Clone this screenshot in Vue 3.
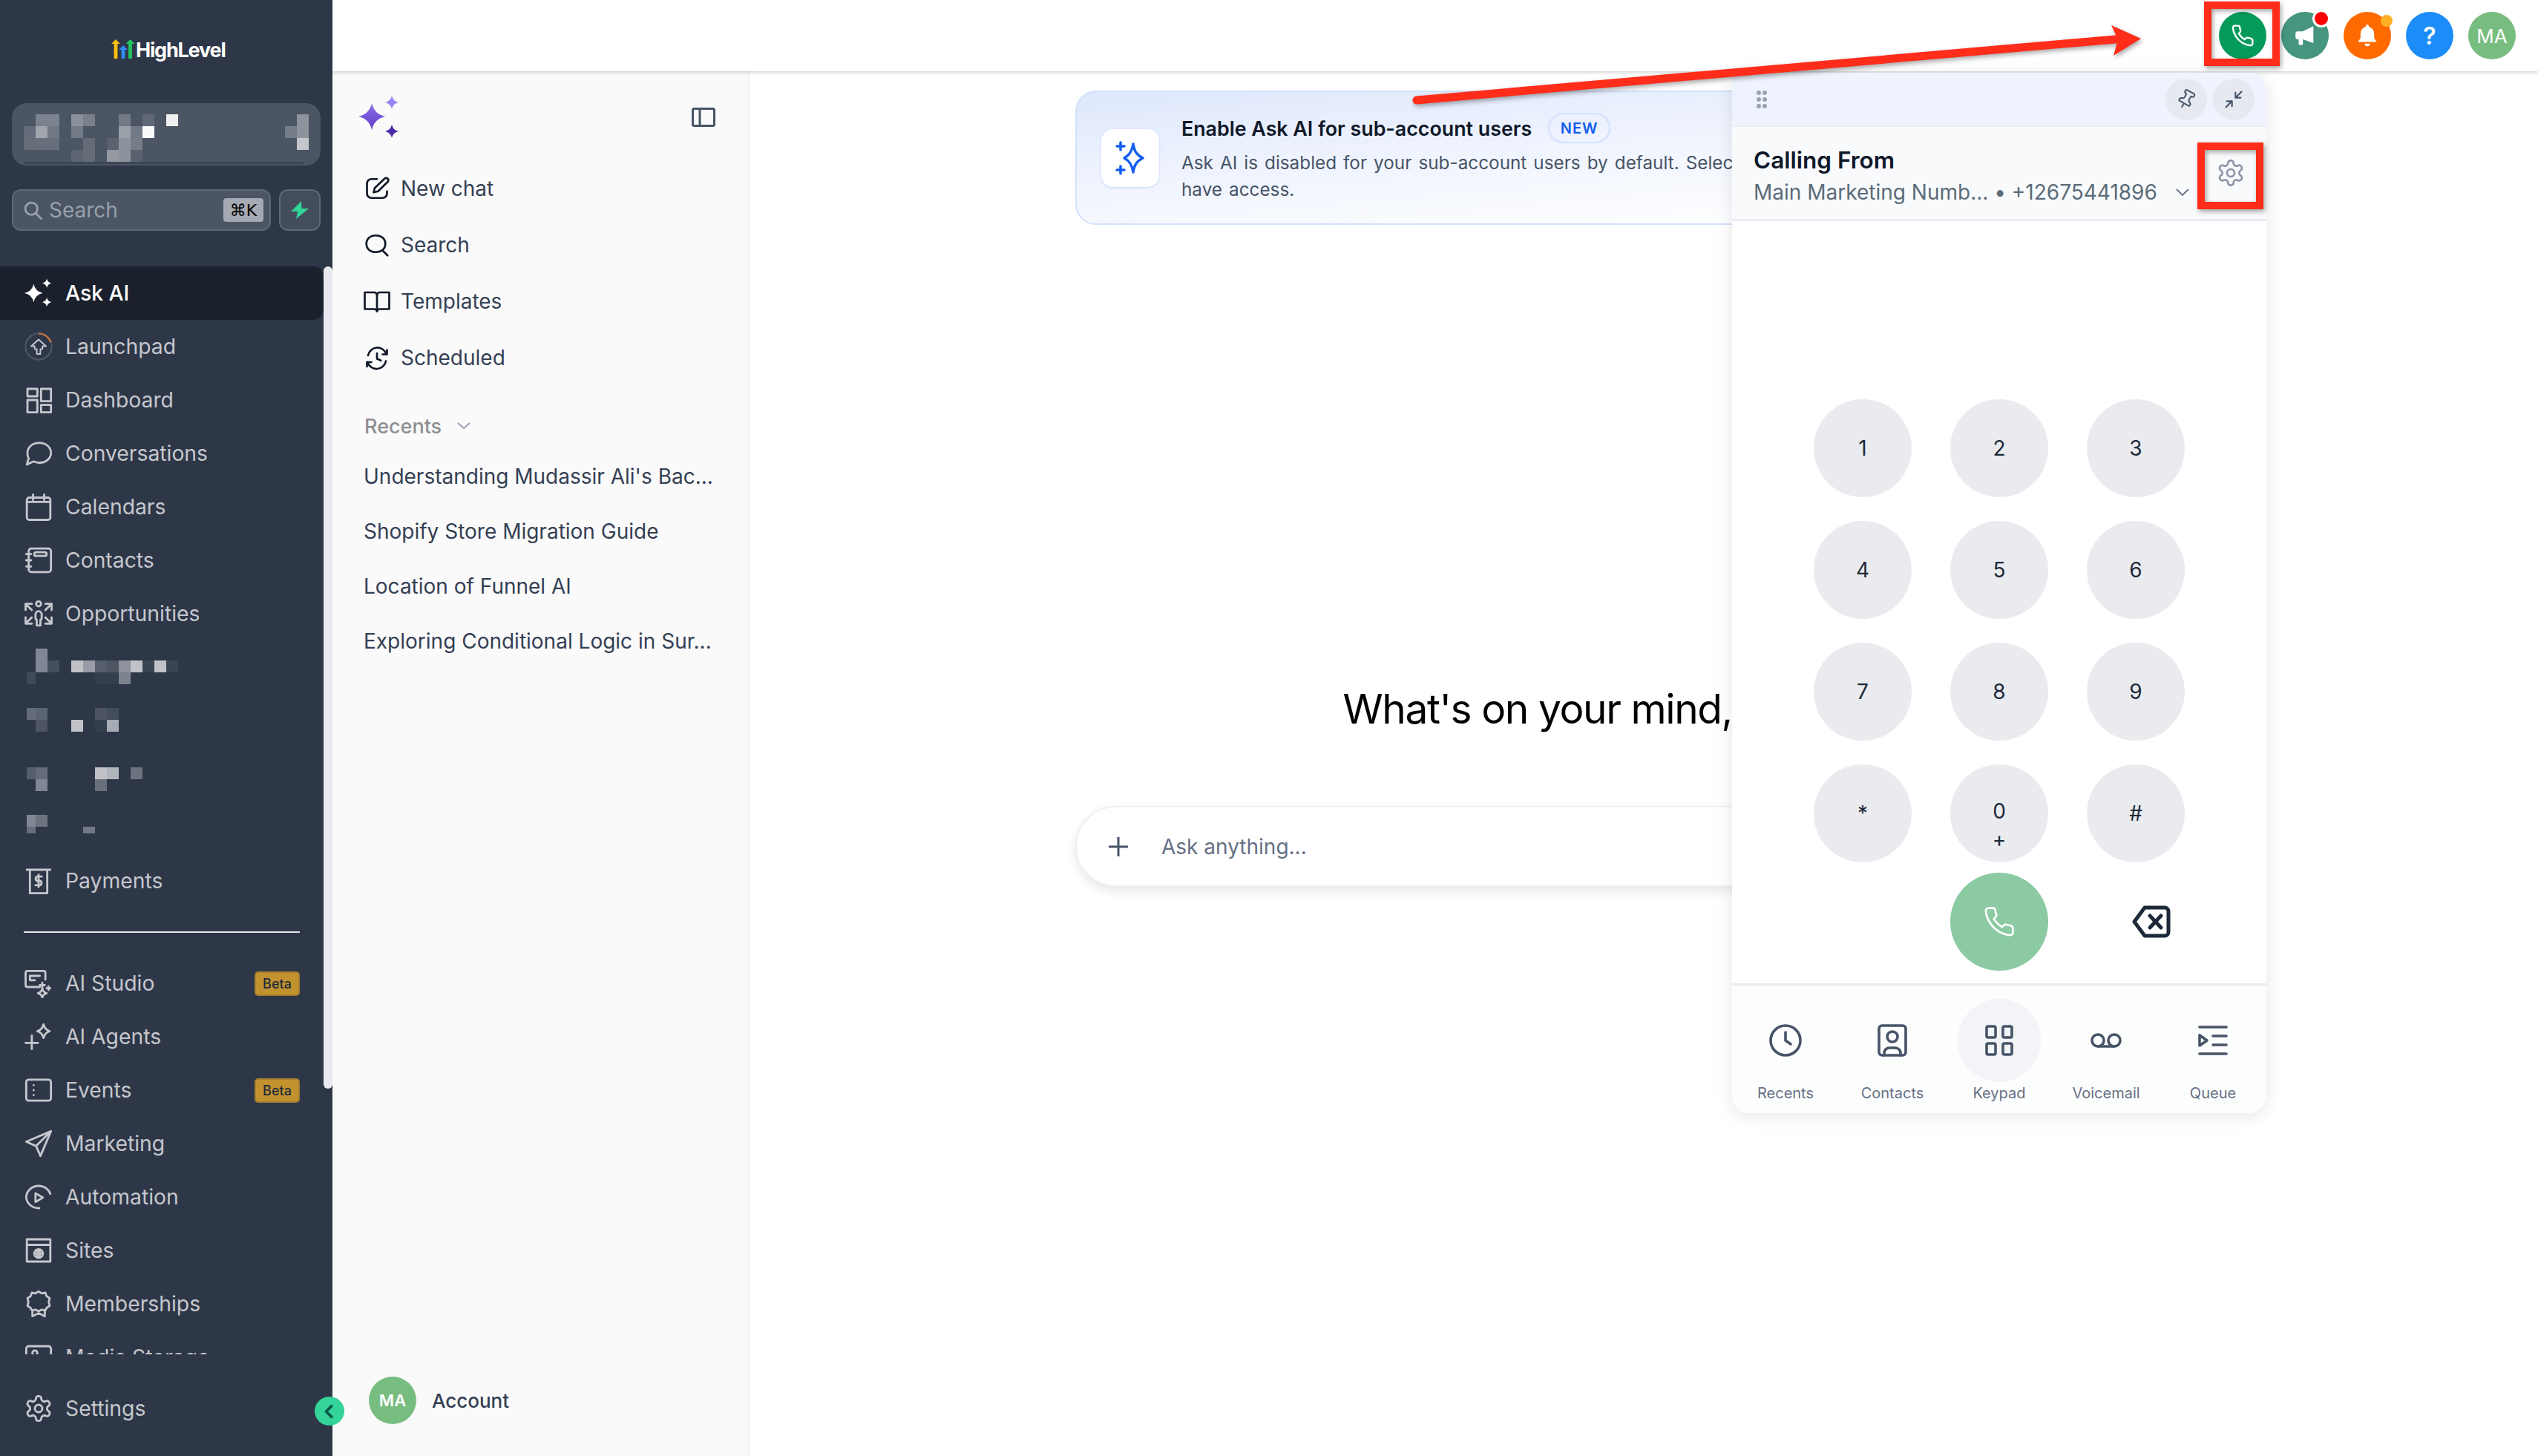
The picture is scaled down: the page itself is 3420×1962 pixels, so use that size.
<template>
  <div class="app">
    <aside class="sidebar">
      <div class="logo">
        <svg class="logo-mark" width="32" height="26" viewBox="0 0 32 26">
          <path fill="#fbbf0e" d="M0 6 6 0l6 6H8.400v20H3.600V6z" />
          <path fill="#2f8bf5" d="M10 14l6-6 6 6h-3.600v12h-4.800V14z" />
          <path fill="#22c55e" d="M19.500 6l6-6 6 6h-3.600v20h-4.800V6z" />
        </svg>
        <span class="logo-text">HighLevel</span>
      </div>

      <div class="switcher">
        <svg width="416" height="84" viewBox="16 0 416 84">
          <rect v-for="(b, i) in switcherBlocks" :key="i" :x="b[0]" :y="b[1]" width="16" height="16" :fill="b[2]" />
          <rect x="32" y="79" width="377" height="3" fill="#3d4655" />
        </svg>
      </div>

      <div class="search-row">
        <div class="side-search">
          <svg class="side-search-icon" width="28" height="28" viewBox="0 0 24 24" fill="none" stroke="#98a0ab" stroke-width="2.400" stroke-linecap="round">
            <circle cx="10.500" cy="10.500" r="7" /><path d="m16 16 6 6" />
          </svg>
          <span class="side-search-text">Search</span>
          <span class="kbd">⌘K</span>
        </div>
        <div class="bolt">
          <svg width="24" height="24" viewBox="0 0 24 24"><path fill="#34d399" d="M14 0 0 14h9l-2 10 17-14h-9.500z" /></svg>
        </div>
      </div>

      <nav class="nav">
        <template v-for="item in navItems" :key="item.key">
          <div v-if="item.blocks" class="nav-row redacted">
            <svg width="436" height="72">
              <rect v-for="(b, i) in item.blocks" :key="i" :x="b[0]" :y="b[1]" :width="b[2]" :height="b[3]" :fill="b[4]" />
            </svg>
          </div>
          <div v-else-if="item.divider" class="nav-divider"></div>
          <div v-else class="nav-row" :class="{ active: item.active }">
            <svg v-if="item.key === 'ask'" class="nav-icon" viewBox="0 0 36 36">
              <path fill="#fff" :d="askStars" />
            </svg>
            <svg v-else-if="item.key === 'launchpad'" class="nav-icon launch" viewBox="0 0 42 42" fill="none">
              <circle cx="21" cy="21" r="18.500" stroke="#4b5563" stroke-width="2.500" />
              <path d="M21 2.500A18.500 18.500 0 0 1 38.500 15" stroke="#b9733f" stroke-width="2.500" />
              <path d="M21 11 10.500 20.500h5v4h3v7h5v-7h3v-4h5z" stroke="#c5c7cd" stroke-width="2" stroke-linejoin="round" />
            </svg>
            <svg v-else class="nav-icon" viewBox="0 0 24 24" fill="none" stroke="currentColor" stroke-width="1.700" stroke-linecap="round" stroke-linejoin="round">
              <path v-for="(d, i) in item.paths" :key="i" :d="d" />
            </svg>
            <span class="nav-label">{{ item.label }}</span>
            <span v-if="item.beta" class="beta">Beta</span>
          </div>
        </template>
      </nav>

      <div class="nav-row settings">
        <svg class="nav-icon" viewBox="0 0 24 24" fill="none" stroke="currentColor" stroke-width="1.700" stroke-linecap="round" stroke-linejoin="round">
          <path :d="gear" /><circle cx="12" cy="12" r="3" />
        </svg>
        <span class="nav-label">Settings</span>
      </div>

      <div class="scroll-thumb"></div>
      <div class="collapse">
        <svg width="22" height="22" viewBox="0 0 24 24" fill="none" stroke="#0c5a48" stroke-width="4" stroke-linecap="round" stroke-linejoin="round"><path d="M15 4l-8 8 8 8" /></svg>
      </div>
    </aside>

    <div class="content">
      <header class="topbar">
        <div class="top-btn phone-btn">
          <svg width="32" height="32" viewBox="0 0 24 24" fill="none" stroke="#fff" stroke-width="1.800" stroke-linejoin="round"><path :d="phone" /></svg>
        </div>
        <div class="top-btn news-btn">
          <svg width="34" height="34" viewBox="0 0 24 24" fill="#fff"><path d="M20 3v16L10 15.500V20a1 1 0 0 1-1 1H7a1 1 0 0 1-1-1v-4.500H5a2 2 0 0 1-2-2v-3.500a2 2 0 0 1 2-2h5z" /></svg>
          <span class="dot red"></span>
        </div>
        <div class="top-btn bell-btn">
          <svg width="34" height="34" viewBox="0 0 24 24" fill="#fff"><path d="M12 1.500a1.500 1.500 0 0 1 1.500 1.500v.6A6.500 6.500 0 0 1 18.500 10v4.500L21 18H3l2.500-3.500V10a6.500 6.500 0 0 1 5-6.400V3A1.500 1.500 0 0 1 12 1.500zM9.500 19.500h5a2.500 2.500 0 0 1-5 0z" /></svg>
          <span class="dot yellow"></span>
        </div>
        <div class="top-btn help">?</div>
        <div class="top-btn avatar-text">MA</div>
      </header>

      <div class="body">
        <section class="chats">
          <div class="chats-head">
            <svg width="54" height="58" viewBox="0 0 54 58">
              <defs>
                <linearGradient id="sparkA" x1="0" y1="0" x2="0" y2="1"><stop offset="0" stop-color="#8b6ee8" /><stop offset="1" stop-color="#5f3dc4" /></linearGradient>
              </defs>
              <path fill="url(#sparkA)" :d="logoBig" />
              <path fill="#9b82f5" :d="logoTop" />
              <path fill="#4c2ba8" :d="logoBottom" />
            </svg>
            <svg width="32" height="26" viewBox="0 0 32 26" fill="none" stroke="#475467" stroke-width="3"><rect x="1.500" y="1.500" width="29" height="23" rx="2" /><path d="M11 1.500v23" /></svg>
          </div>

          <div v-for="a in chatActions" :key="a.label" class="chat-action">
            <svg width="36" height="36" viewBox="0 0 24 24" fill="none" stroke="#101828" stroke-width="1.800" stroke-linecap="round" stroke-linejoin="round">
              <path v-for="(d, i) in a.paths" :key="i" :d="d" />
            </svg>
            <span>{{ a.label }}</span>
          </div>

          <div class="recents-title">
            <span>Recents</span>
            <svg width="20" height="12" viewBox="0 0 20 12" fill="none" stroke="#98a2b3" stroke-width="2"><path d="M2 2l8 7 8-7" /></svg>
          </div>
          <div v-for="r in recents" :key="r" class="recent">{{ r }}</div>

          <div class="account">
            <div class="account-avatar">MA</div>
            <span>Account</span>
          </div>
        </section>

        <main class="main">
          <div class="banner">
            <div class="banner-icon">
              <svg width="40" height="46" viewBox="0 0 40 46" fill="none" stroke="#155eef" stroke-width="3.500" stroke-linecap="round" stroke-linejoin="round">
                <path d="M24 4c1.500 10 5 15 13 19-8 4-11.500 9-13 19-1.500-10-5-15-12-19 7-4 10.500-9 12-19z" />
                <path d="M7 2v10M2 7h10M7 34v10M2 39h10" />
              </svg>
            </div>
            <div class="banner-text">
              <div class="banner-title">
                <span>Enable Ask AI for sub-account users</span>
                <span class="new-pill">NEW</span>
              </div>
              <p>Ask AI is disabled for your sub-account users by default. Select which users should<br />have access.</p>
            </div>
          </div>

          <h1 class="greeting">What's on your mind, Mudassir?</h1>

          <div class="ask-box">
            <svg width="30" height="30" viewBox="0 0 30 30" fill="none" stroke="#475467" stroke-width="3"><path d="M15 2v26M2 15h26" /></svg>
            <span>Ask anything...</span>
          </div>
        </main>
      </div>
    </div>

    <!-- floating dialer -->
    <div class="dialer">
      <div class="dialer-head">
        <svg class="drag" width="16" height="24" viewBox="0 0 16 24" fill="#98a2b3">
          <circle v-for="(p, i) in dragDots" :key="i" :cx="p[0]" :cy="p[1]" r="3" />
        </svg>
        <div class="head-btn">
          <svg width="28" height="28" viewBox="0 0 24 24" fill="none" stroke="#475467" stroke-width="1.700" stroke-linejoin="round" stroke-linecap="round"><path d="M12 17v5M9 10.800a2 2 0 0 1-1.100 1.800l-1.800.9A2 2 0 0 0 5 15.200V16a1 1 0 0 0 1 1h12a1 1 0 0 0 1-1v-.8a2 2 0 0 0-1.100-1.800l-1.800-.9a2 2 0 0 1-1.100-1.800V7a1 1 0 0 1 1-1 2 2 0 0 0 0-4H8a2 2 0 0 0 0 4 1 1 0 0 1 1 1z" transform="rotate(30 12 12)" /></svg>
        </div>
        <div class="head-btn">
          <svg width="28" height="28" viewBox="0 0 24 24" fill="none" stroke="#475467" stroke-width="1.800" stroke-linecap="round" stroke-linejoin="round"><path d="M21 3l-7 7M14 4v6h6M3 21l7-7M4 14h6v6" /></svg>
        </div>
      </div>

      <div class="calling">
        <div class="calling-text">
          <div class="calling-title">Calling From</div>
          <div class="calling-line">
            <span>Main Marketing Numb... • +12675441896</span>
            <svg width="20" height="12" viewBox="0 0 20 12" fill="none" stroke="#667085" stroke-width="1.800"><path d="M2 2l8 8 8-8" /></svg>
          </div>
        </div>
        <svg class="calling-gear" width="40" height="40" viewBox="0 0 24 24" fill="none" stroke="#8d96a8" stroke-width="1.600" stroke-linejoin="round">
          <path :d="gear" /><circle cx="12" cy="12" r="3" />
        </svg>
      </div>

      <div class="keypad">
        <div v-for="k in keys" :key="k.digit" class="key" :class="{ plus: k.sub }">
          <span>{{ k.digit }}</span>
          <span v-if="k.sub" class="key-sub">{{ k.sub }}</span>
        </div>
        <div class="key-spacer"></div>
        <div class="call-btn">
          <svg width="44" height="44" viewBox="0 0 24 24" fill="none" stroke="#fff" stroke-width="1.500" stroke-linejoin="round"><path :d="phone" /></svg>
        </div>
        <div class="backspace">
          <svg width="52" height="44" viewBox="0 0 52 44" fill="none" stroke="#1d2939" stroke-width="5" stroke-linecap="round" stroke-linejoin="round">
            <path d="M17 3h27a5 5 0 0 1 5 5v28a5 5 0 0 1-5 5H17L3 22z" /><path d="M24 14l15 16M39 14 24 30" />
          </svg>
        </div>
      </div>

      <div class="tabs">
        <div v-for="t in tabs" :key="t.label" class="tab" :class="{ current: t.current }">
          <div class="tab-circle">
            <svg width="48" height="48" viewBox="0 0 24 24" fill="none" stroke="#475467" stroke-width="1.800" stroke-linecap="round" stroke-linejoin="round">
              <path v-for="(d, i) in t.paths" :key="i" :d="d" />
            </svg>
          </div>
          <span>{{ t.label }}</span>
        </div>
      </div>
    </div>

    <!-- red annotations from the screenshot -->
    <svg class="marks" width="3420" height="1962">
      <path d="M1909 135 2862 52" stroke="#ff2d1a" stroke-width="11" stroke-linecap="round" />
      <path d="M2845 34 2885 52 2848 75 2854 53z" fill="#ff2d1a" />
      <rect x="2975" y="7" width="92" height="77" fill="none" stroke="#ff2d1a" stroke-width="10" />
      <rect x="2966" y="197" width="79" height="80" fill="none" stroke="#ff2d1a" stroke-width="10" />
    </svg>
  </div>
</template>

<script setup>
function star(cx, cy, r) {
  const k = r * 0.18;
  return `M${cx} ${cy - r}Q${cx + k} ${cy - k} ${cx + r} ${cy}Q${cx + k} ${cy + k} ${cx} ${cy + r}Q${cx - k} ${cy + k} ${cx - r} ${cy}Q${cx - k} ${cy - k} ${cx} ${cy - r}Z`;
}

const askStars = star(12, 18, 11) + star(28, 6, 5.5) + star(28, 29, 5.5);
const logoBig = star(18, 28, 18);
const logoTop = star(45, 9, 9);
const logoBottom = star(45, 48, 9);

const gear =
  'M12.220 2h-.44a2 2 0 0 0-2 2v.18a2 2 0 0 1-1 1.730l-.43.25a2 2 0 0 1-2 0l-.15-.08a2 2 0 0 0-2.730.73l-.22.38a2 2 0 0 0 .73 2.730l.15.1a2 2 0 0 1 1 1.720v.51a2 2 0 0 1-1 1.740l-.15.09a2 2 0 0 0-.73 2.730l.22.38a2 2 0 0 0 2.730.73l.15-.08a2 2 0 0 1 2 0l.43.25a2 2 0 0 1 1 1.730V20a2 2 0 0 0 2 2h.44a2 2 0 0 0 2-2v-.18a2 2 0 0 1 1-1.730l.43-.25a2 2 0 0 1 2 0l.15.08a2 2 0 0 0 2.730-.73l.22-.39a2 2 0 0 0-.73-2.730l-.15-.08a2 2 0 0 1-1-1.740v-.5a2 2 0 0 1 1-1.740l.15-.09a2 2 0 0 0 .73-2.730l-.22-.38a2 2 0 0 0-2.730-.73l-.15.08a2 2 0 0 1-2 0l-.43-.25a2 2 0 0 1-1-1.730V4a2 2 0 0 0-2-2z';
const phone =
  'M22 16.920v3a2 2 0 0 1-2.180 2 19.790 19.790 0 0 1-8.630-3.070 19.500 19.500 0 0 1-6-6 19.790 19.790 0 0 1-3.070-8.670A2 2 0 0 1 4.110 2h3a2 2 0 0 1 2 1.720 12.840 12.840 0 0 0 .7 2.810 2 2 0 0 1-.45 2.110L8.090 9.910a16 16 0 0 0 6 6l1.270-1.270a2 2 0 0 1 2.110-.45 12.840 12.840 0 0 0 2.810.7A2 2 0 0 1 22 16.920z';

// mosaic redaction blocks: x, y, colour
const switcherBlocks = [
  [48, 15, '#7a838f'], [64, 15, '#7a838f'], [96, 15, '#8a919b'], [112, 15, '#78808c'], [160, 15, '#727a86'], [192, 15, '#5f6874'], [224, 15, '#f0f0f0'],
  [32, 31, '#636c78'], [48, 31, '#a0a5ad'], [64, 31, '#6f7883'], [96, 31, '#727a86'], [160, 31, '#9aa0a8'], [176, 31, '#727a86'], [192, 31, '#fafafa'],
  [32, 47, '#646d78'], [48, 47, '#666f7b'], [64, 47, '#666f7b'], [112, 47, '#646c78'], [144, 47, '#59626e'], [160, 47, '#8d939c'], [176, 47, '#757d88'],
  [96, 63, '#5c6571'], [112, 63, '#656d79'], [144, 63, '#9398a1'], [160, 63, '#8d939c'], [176, 63, '#59626e'],
  [400, 15, '#8d939c'], [384, 31, '#757d88'], [400, 31, '#8d939c'], [400, 47, '#c4c6ca'],
];

const navItems = [
  { key: 'ask', label: 'Ask AI', active: true },
  { key: 'launchpad', label: 'Launchpad' },
  { key: 'dashboard', label: 'Dashboard', paths: ['M3 3h8v6H3zM14 3h8v10h-8zM3 12h8v10H3zM14 16h8v6h-8z'] },
  { key: 'conversations', label: 'Conversations', paths: ['M22 11.500a9 8 0 0 1-9.500 8 10 10 0 0 1-4.500-1L2.500 21l1.500-5A8 8 0 0 1 3 11.500a9 8 0 0 1 9.500-8 9 8 0 0 1 9.500 8z'] },
  { key: 'calendars', label: 'Calendars', paths: ['M4.500 4.500h15a2 2 0 0 1 2 2v14a2 2 0 0 1-2 2h-15a2 2 0 0 1-2-2v-14a2 2 0 0 1 2-2zM7.500 2v4.500M16.500 2v4.500M2.500 8h19'] },
  { key: 'contacts', label: 'Contacts', paths: ['M6 2.500h14a2 2 0 0 1 2 2v15a2 2 0 0 1-2 2H6a2 2 0 0 1-2-2v-15a2 2 0 0 1 2-2zM10 5.500h7a1.500 1.500 0 0 1 0 3h-7a1.500 1.500 0 0 1 0-3zM2 7h4M2 12h4M2 17h4'] },
  { key: 'opportunities', label: 'Opportunities', paths: ['M14 4a2 2 0 1 1-4 0 2 2 0 0 1 4 0zM9.500 12.500a2.500 2.500 0 0 1 5 0V16l-1 1v4.500h-3V17l-1-1zM1.500 9V4h5M1.500 4l5 5M22.500 9V4h-5M22.500 4l-5 5M1.500 15v5h5M1.500 20l5-5M22.500 15v5h-5M22.500 20l-5-5'] },
  { key: 'r1', blocks: [[48, 11, 16, 32, '#7f8794'], [64, 27, 16, 16, '#454e5b'], [36, 43, 12, 16, '#414a58'], [96, 27, 16, 16, '#c0c2c8'], [112, 27, 16, 16, '#979ca6'], [128, 27, 16, 16, '#565e6b'], [144, 27, 16, 16, '#4d5562'], [160, 27, 16, 16, '#8d929c'], [176, 27, 16, 16, '#c0c2c8'], [192, 27, 16, 16, '#3b4452'], [208, 27, 16, 16, '#c0c2c8'], [224, 27, 16, 16, '#3b4452'], [128, 43, 32, 16, '#353e4c'], [160, 43, 16, 16, '#7d838e']] },
  { key: 'r2', blocks: [[36, 19, 12, 16, '#646c79'], [48, 19, 16, 16, '#5a6370'], [48, 35, 16, 16, '#4d5562'], [96, 35, 16, 16, '#c0c2c8'], [128, 19, 16, 16, '#4d5562'], [144, 19, 16, 16, '#434c5a'], [128, 35, 16, 16, '#353e4c'], [144, 35, 16, 16, '#a7abb3']] },
  { key: 'r3', blocks: [[36, 27, 12, 16, '#555e6b'], [48, 27, 16, 16, '#646c79'], [48, 43, 16, 16, '#7f8794'], [128, 27, 16, 16, '#c0c2c8'], [144, 27, 16, 16, '#b0b4bb'], [176, 27, 16, 16, '#6d7480'], [128, 43, 16, 16, '#69707c']] },
  { key: 'r4', blocks: [[36, 19, 12, 16, '#7f8794'], [48, 19, 16, 16, '#6d7480'], [36, 35, 12, 9, '#666e7a'], [112, 35, 16, 9, '#737a85']] },
  { key: 'payments', label: 'Payments', paths: ['M2.500 3h19M5 3v19h14V3M14.500 8.500h-3.500a1.800 1.800 0 0 0 0 3.500h2a1.800 1.800 0 0 1 0 3.500H9.500M12 7v10'] },
  { key: 'div', divider: true },
  { key: 'studio', label: 'AI Studio', beta: true, paths: ['M13 15H3a1.500 1.500 0 0 1-1.500-1.500v-10A1.500 1.500 0 0 1 3 2h13a1.500 1.500 0 0 1 1.500 1.500V9M5 6h8M5 6v3.500h4M15 11.500v4M13 13.500h4M20 14.500v3M18.500 16h3M15 16c.5 2.500 1.500 3.500 3.500 4-2 .5-3 1.500-3.500 3.500-.5-2-1.500-3-3.500-3.500 2-.5 3-1.500 3.500-4z'] },
  { key: 'agents', label: 'AI Agents', paths: ['M16 2c.7 3 2 4.500 5 5.500-3 1-4.300 2.500-5 5.500-.7-3-2-4.500-5-5.500 3-1 4.300-2.500 5-5.500zM6.500 11v11M1.500 17h10'] },
  { key: 'events', label: 'Events', beta: true, paths: ['M4 3.500h16a2 2 0 0 1 2 2v13a2 2 0 0 1-2 2H4a2 2 0 0 1-2-2v-13a2 2 0 0 1 2-2zM8 8v.01M8 12v.01M8 16v.01'] },
  { key: 'marketing', label: 'Marketing', paths: ['M22 2 2 10.500l8 3.500 3.500 8zM22 2 10 14'] },
  { key: 'automation', label: 'Automation', paths: ['M21.500 9.500A10 9.500 0 0 0 12.500 3 10 9.500 0 0 0 2 12.500 10 9.500 0 0 0 12.500 21M9.500 9v7l6-3.500z'] },
  { key: 'sites', label: 'Sites', paths: ['M2.500 3h19v18h-19zM2.500 7.500h19M12 11a3.500 3.500 0 1 1 0 7 3.500 3.500 0 0 1 0-7zM8.500 14.500h7M12 11c-1.500 2-1.500 5 0 7M12 11c1.500 2 1.500 5 0 7'] },
  { key: 'memberships', label: 'Memberships', paths: ['M12 2l2.500 1.500 3-.5 1 2.800 2.500 1.700-.8 3 .8 3-2.500 1.700-1 2-3-.5L12 18l-2.500-1.300-3 .5-1-2-2.500-1.700.8-3-.8-3 2.500-1.700 1-2.800 3 .5zM7 17v5l5-2.500 5 2.500v-5'] },
  { key: 'media', label: 'Media Storage', paths: ['M4 3h16a2 2 0 0 1 2 2v14a2 2 0 0 1-2 2H4a2 2 0 0 1-2-2V5a2 2 0 0 1 2-2zM9 6.500a2 2 0 1 1 0 4 2 2 0 0 1 0-4z'] },
];

const chatActions = [
  { label: 'New chat', paths: ['M12 3.500H7a4 4 0 0 0-4 4v9a4 4 0 0 0 4 4h10a4 4 0 0 0 4-4v-2', 'M19 3a2 2 0 0 1 2.800 2.800L13 14.500l-4 1 1-4z'] },
  { label: 'Search', paths: ['M11 3.500c5 0 8.500 3 8.500 7.500s-3.500 7.500-8.500 7.500S2.500 15.500 2.500 11 6 3.500 11 3.500z', 'M17 17l4.500 4.500'] },
  { label: 'Templates', paths: ['M12 6.500a2.500 2.500 0 0 0-2.500-2.500H1v15h8.500a2.500 2.500 0 0 1 2.500 2 2.500 2.500 0 0 1 2.500-2H23V4h-8.500A2.500 2.500 0 0 0 12 6.500z', 'M12 6.500v14.500'] },
  { label: 'Scheduled', paths: ['M4 10a8.500 8.500 0 0 1 16.500-1', 'M20 15a8.500 8.500 0 0 1-16.500 1', 'M21 5v4h-4', 'M3 20v-4h4', 'M12 8v5l3.500 1.500'] },
];

const recents = ["Understanding Mudassir Ali's Bac...", 'Shopify Store Migration Guide', 'Location of Funnel AI', 'Exploring Conditional Logic in Sur...'];

const dragDots = [[4, 3], [12, 3], [4, 12], [12, 12], [4, 21], [12, 21]];

const keys = [
  { digit: '1' }, { digit: '2' }, { digit: '3' },
  { digit: '4' }, { digit: '5' }, { digit: '6' },
  { digit: '7' }, { digit: '8' }, { digit: '9' },
  { digit: '*' }, { digit: '0', sub: '+' }, { digit: '#' },
];

const tabs = [
  { label: 'Recents', paths: ['M12 2a10 10 0 1 1 0 20 10 10 0 0 1 0-20z', 'M12 6.500V12l3.500 2.500'] },
  { label: 'Contacts', paths: ['M5 2h14a2 2 0 0 1 2 2v16a2 2 0 0 1-2 2H5a2 2 0 0 1-2-2V4a2 2 0 0 1 2-2z', 'M12 6a3.500 3.500 0 1 1 0 7 3.500 3.500 0 0 1 0-7z', 'M6.500 22v-1.500a3.500 3.500 0 0 1 3.500-3.500h4a3.500 3.500 0 0 1 3.500 3.500V22'] },
  { label: 'Keypad', current: true, paths: ['M4.500 2.500h4a1 1 0 0 1 1 1v5.500a1 1 0 0 1-1 1h-4a1 1 0 0 1-1-1V3.500a1 1 0 0 1 1-1z', 'M15.500 2.500h4a1 1 0 0 1 1 1v5.500a1 1 0 0 1-1 1h-4a1 1 0 0 1-1-1V3.500a1 1 0 0 1 1-1z', 'M4.500 14h4a1 1 0 0 1 1 1v5.500a1 1 0 0 1-1 1h-4a1 1 0 0 1-1-1V15a1 1 0 0 1 1-1z', 'M15.500 14h4a1 1 0 0 1 1 1v5.500a1 1 0 0 1-1 1h-4a1 1 0 0 1-1-1V15a1 1 0 0 1 1-1z'] },
  { label: 'Voicemail', paths: ['M6.500 8a4 4 0 1 1 0 8 4 4 0 0 1 0-8z', 'M17.500 8a4 4 0 1 1 0 8 4 4 0 0 1 0-8z', 'M6.500 16h11'] },
  { label: 'Queue', paths: ['M3 3h18', 'M3 21h18', 'M3 8.500v7l5-3.500z', 'M12 9h9', 'M12 15h9'] },
];
</script>

<style>
html,
body {
  margin: 0;
  background: #fff;
}
</style>

<style scoped>
* {
  box-sizing: border-box;
}
.app {
  position: relative;
  display: flex;
  width: 3420px;
  height: 1962px;
  overflow: hidden;
  font-family: Inter, "Noto Sans", sans-serif;
  color: #101828;
}

/* sidebar */
.sidebar {
  position: relative;
  z-index: 3;
  flex: 0 0 448px;
  display: flex;
  flex-direction: column;
  background: #2e3748;
}
.logo {
  height: 139px;
  padding: 53px 0 0 150px;
  display: flex;
  align-items: flex-start;
  gap: 1px;
}
.logo-text {
  color: #fff;
  font-size: 27px;
  font-weight: 700;
  letter-spacing: -1.200px;
  line-height: 30px;
}
.switcher {
  height: 84px;
  margin: 0 16px;
  background: #4b5563;
  border-radius: 20px;
  overflow: hidden;
}
.switcher svg {
  display: block;
}
.search-row {
  display: flex;
  gap: 11px;
  margin: 32px 16px 0;
  height: 56px;
}
.side-search {
  flex: 1;
  display: flex;
  align-items: center;
  padding: 0 8px 0 12px;
  background: #4b5563;
  border: 2px solid #5f6874;
  border-radius: 12px;
}
.side-search-icon {
  margin-right: 8px;
}
.side-search-text {
  flex: 1;
  color: #98a0ab;
  font-size: 28px;
}
.kbd {
  width: 54px;
  height: 32px;
  display: flex;
  align-items: center;
  justify-content: center;
  background: #a4a9b3;
  border-radius: 4px;
  color: #000;
  font-size: 22px;
  font-family: "DejaVu Sans", sans-serif;
}
.bolt {
  flex: 0 0 56px;
  display: flex;
  align-items: center;
  justify-content: center;
  background: #434d5c;
  border: 2px solid #5f6874;
  border-radius: 12px;
}
.nav {
  height: 1466px;
  margin-top: 48px;
  overflow: hidden;
  flex-shrink: 0;
}
.nav-row {
  width: 436px;
  height: 72px;
  display: flex;
  align-items: center;
  padding-left: 32px;
  color: #c5c7cd;
  font-size: 28.300px;
  border-radius: 0 14px 14px 0;
}
.nav-row.redacted {
  padding-left: 0;
}
.nav-row.active {
  background: #1a202c;
  color: #fff;
  font-weight: 500;
}
.nav-icon {
  flex: 0 0 40px;
  width: 40px;
  height: 40px;
  margin-right: 16px;
}
.launch {
  color: #c5c7cd;
}
.nav-label {
  flex: 1;
}
.beta {
  width: 61px;
  height: 33px;
  margin-right: 32px;
  display: flex;
  align-items: center;
  justify-content: center;
  background: #c1922e;
  border: 2px solid #a67f2d;
  border-radius: 5px;
  color: #1f2a3c;
  font-size: 18px;
  font-weight: 500;
}
.nav-divider {
  height: 2px;
  margin: 32px 44px 32px 32px;
  background: #e4e6ea;
}
.settings {
  margin-top: 37px;
}
.scroll-thumb {
  position: absolute;
  left: 436px;
  top: 359px;
  width: 12px;
  height: 1108px;
  background: #e9eaf0;
  border-radius: 6px;
}
.collapse {
  position: absolute;
  left: 424px;
  top: 1882px;
  width: 40px;
  height: 39px;
  display: flex;
  align-items: center;
  justify-content: center;
  background: #34d399;
  border-radius: 50%;
}

/* content */
.content {
  flex: 1;
  display: flex;
  flex-direction: column;
  min-width: 0;
}
.topbar {
  position: relative;
  z-index: 2;
  height: 96px;
  flex-shrink: 0;
  display: flex;
  justify-content: flex-end;
  align-items: center;
  gap: 20px;
  padding-right: 30px;
  background: #fff;
  box-shadow: 0 2px 4px rgba(16, 24, 40, 0.18);
}
.top-btn {
  position: relative;
  width: 64px;
  height: 64px;
  border-radius: 50%;
  display: flex;
  align-items: center;
  justify-content: center;
  color: #fff;
}
.phone-btn {
  background: #059a5a;
}
.news-btn {
  background: #46957f;
}
.bell-btn {
  background: #fe6a00;
}
.help {
  background: #1c8df8;
  font-size: 32px;
  font-weight: 600;
}
.avatar-text {
  background: #78bd80;
  font-size: 26px;
}
.dot {
  position: absolute;
  border-radius: 50%;
}
.dot.red {
  right: -2px;
  top: -3px;
  width: 24px;
  height: 24px;
  background: #ff0000;
  border: 3px solid #fff;
}
.dot.yellow {
  right: -2px;
  top: 4px;
  width: 16px;
  height: 16px;
  background: #fdb022;
}
.body {
  flex: 1;
  display: flex;
  min-height: 0;
}

/* chat list */
.chats {
  flex: 0 0 562px;
  display: flex;
  flex-direction: column;
  padding: 33px 0 43px;
  background: #fafafa;
  border-right: 2px solid #f0f0f2;
}
.chats-head {
  display: flex;
  align-items: center;
  justify-content: space-between;
  height: 58px;
  padding: 0 44px 0 35px;
  margin-bottom: 29px;
}
.chat-action {
  height: 76px;
  display: flex;
  align-items: center;
  gap: 14px;
  padding-left: 42px;
  font-size: 28px;
  color: #344054;
}
.recents-title {
  height: 40px;
  margin-top: 34px;
  padding-left: 43px;
  display: flex;
  align-items: center;
  gap: 20px;
  color: #8e8e93;
  font-size: 27px;
  font-weight: 500;
}
.recents-title + .recent {
  margin-top: 11px;
}
.recent {
  height: 74px;
  padding-left: 42px;
  display: flex;
  align-items: center;
  font-size: 28px;
  color: #344054;
  white-space: nowrap;
}
.account {
  margin-top: auto;
  padding-left: 49px;
  display: flex;
  align-items: center;
  gap: 21px;
  font-size: 26px;
  font-weight: 500;
  color: #344054;
}
.account-avatar {
  width: 64px;
  height: 64px;
  border-radius: 50%;
  display: flex;
  align-items: center;
  justify-content: center;
  background: #78bd80;
  color: #fff;
  font-size: 22px;
  font-weight: 600;
}

/* main */
.main {
  flex: 1;
  display: flex;
  flex-direction: column;
  align-items: center;
  padding-top: 26px;
  background: #fff;
}
.banner {
  width: 1532px;
  height: 181px;
  flex-shrink: 0;
  display: flex;
  align-items: center;
  gap: 30px;
  padding: 0 0 0 33px;
  background: linear-gradient(175deg, #dee8fc 0%, #edf2fd 35%, #fff 85%);
  border: 2px solid #d3e1fb;
  border-radius: 28px;
}
.banner-icon {
  width: 78px;
  height: 78px;
  display: flex;
  align-items: center;
  justify-content: center;
  background: #fff;
  border-radius: 16px;
  box-shadow: 0 1px 3px rgba(21, 94, 239, 0.2);
}
.banner-title {
  display: flex;
  align-items: center;
  gap: 22px;
  font-size: 26.800px;
  font-weight: 600;
  color: #101828;
}
.new-pill {
  width: 84px;
  height: 41px;
  display: flex;
  align-items: center;
  justify-content: center;
  border: 2px solid #d1e0ff;
  border-radius: 21px;
  color: #155eef;
  font-size: 20px;
  font-weight: 600;
  letter-spacing: 1px;
}
.banner-text p {
  margin: 8px 0 0;
  font-size: 24.300px;
  word-spacing: 2.200px;
  line-height: 36px;
  color: #475467;
  white-space: nowrap;
}
.greeting {
  margin: 619px 0 0;
  padding-right: 18px;
  font-size: 55px;
  font-weight: 400;
  letter-spacing: -1.400px;
  line-height: 66px;
  color: #000;
  white-space: nowrap;
}
.ask-box {
  width: 1532px;
  height: 109px;
  margin-top: 98px;
  flex-shrink: 0;
  display: flex;
  align-items: center;
  gap: 43px;
  padding-left: 41px;
  background: #fff;
  border: 2px solid #f0f0f2;
  border-radius: 55px;
  box-shadow: 0 6px 14px rgba(16, 24, 40, 0.1);
  color: #667085;
  font-size: 28px;
}

/* dialer */
.dialer {
  position: absolute;
  z-index: 4;
  left: 2334px;
  top: 98px;
  width: 720px;
  height: 1402px;
  display: flex;
  flex-direction: column;
  background: #fff;
  border-radius: 0 24px 24px 24px;
  box-shadow: 0 4px 24px rgba(16, 24, 40, 0.1);
  overflow: hidden;
}
.dialer-head {
  height: 73px;
  flex-shrink: 0;
  display: flex;
  align-items: center;
  gap: 8px;
  padding: 0 16px 0 32px;
  background: #eef3fd;
  border-bottom: 2px solid #ebecf1;
}
.drag {
  margin-right: auto;
}
.head-btn {
  width: 56px;
  height: 56px;
  display: flex;
  align-items: center;
  justify-content: center;
  border-radius: 50%;
  background: #e6e9f0;
}
.calling {
  height: 127px;
  flex-shrink: 0;
  display: flex;
  align-items: center;
  padding: 0 28px 0 29px;
  background: #f8fafc;
  border-bottom: 3px solid #ebecf1;
}
.calling-text {
  flex: 1;
  padding-top: 7px;
}
.calling-title {
  font-size: 31.500px;
  font-weight: 600;
  line-height: 40px;
  color: #101828;
}
.calling-line {
  display: flex;
  align-items: center;
  gap: 24px;
  margin-top: 5px;
  font-size: 28px;
  line-height: 36px;
  color: #5b6b78;
  white-space: nowrap;
}
.keypad {
  height: 1027px;
  flex-shrink: 0;
  display: grid;
  grid-template-columns: repeat(3, 132px);
  grid-auto-rows: 132px;
  column-gap: 52px;
  row-gap: 32px;
  align-content: start;
  padding: 240px 0 0 110px;
}
.key {
  display: flex;
  flex-direction: column;
  align-items: center;
  justify-content: center;
  border-radius: 50%;
  background: #eaebef;
  font-size: 28px;
  color: #1d2939;
}
.key.plus {
  justify-content: flex-start;
  padding-top: 46px;
}
.key-sub {
  margin-top: 4px;
  line-height: 34px;
}
.key-spacer {
  height: 132px;
}
.call-btn {
  margin-top: -18px;
  width: 132px;
  height: 132px;
  display: flex;
  align-items: center;
  justify-content: center;
  border-radius: 50%;
  background: #8bcaa3;
}
.backspace {
  margin-top: -18px;
  height: 132px;
  display: flex;
  align-items: center;
  justify-content: center;
  padding-left: 42px;
}
.tabs {
  flex: 1;
  display: grid;
  grid-template-columns: repeat(5, 144px);
  padding-top: 18px;
  background: #fcfdfd;
  border-top: 3px solid #ebecf1;
}
.tab {
  display: flex;
  flex-direction: column;
  align-items: center;
  font-size: 20px;
  line-height: 24px;
  color: #667085;
}
.tab-circle {
  width: 112px;
  height: 112px;
  margin-bottom: 3px;
  display: flex;
  align-items: center;
  justify-content: center;
  border-radius: 50%;
}
.tab.current .tab-circle {
  background: #f2f4f7;
}

.marks {
  position: absolute;
  left: 0;
  top: 0;
  z-index: 5;
  pointer-events: none;
  filter: drop-shadow(2px 3px 3px rgba(0, 0, 0, 0.35));
}
</style>
